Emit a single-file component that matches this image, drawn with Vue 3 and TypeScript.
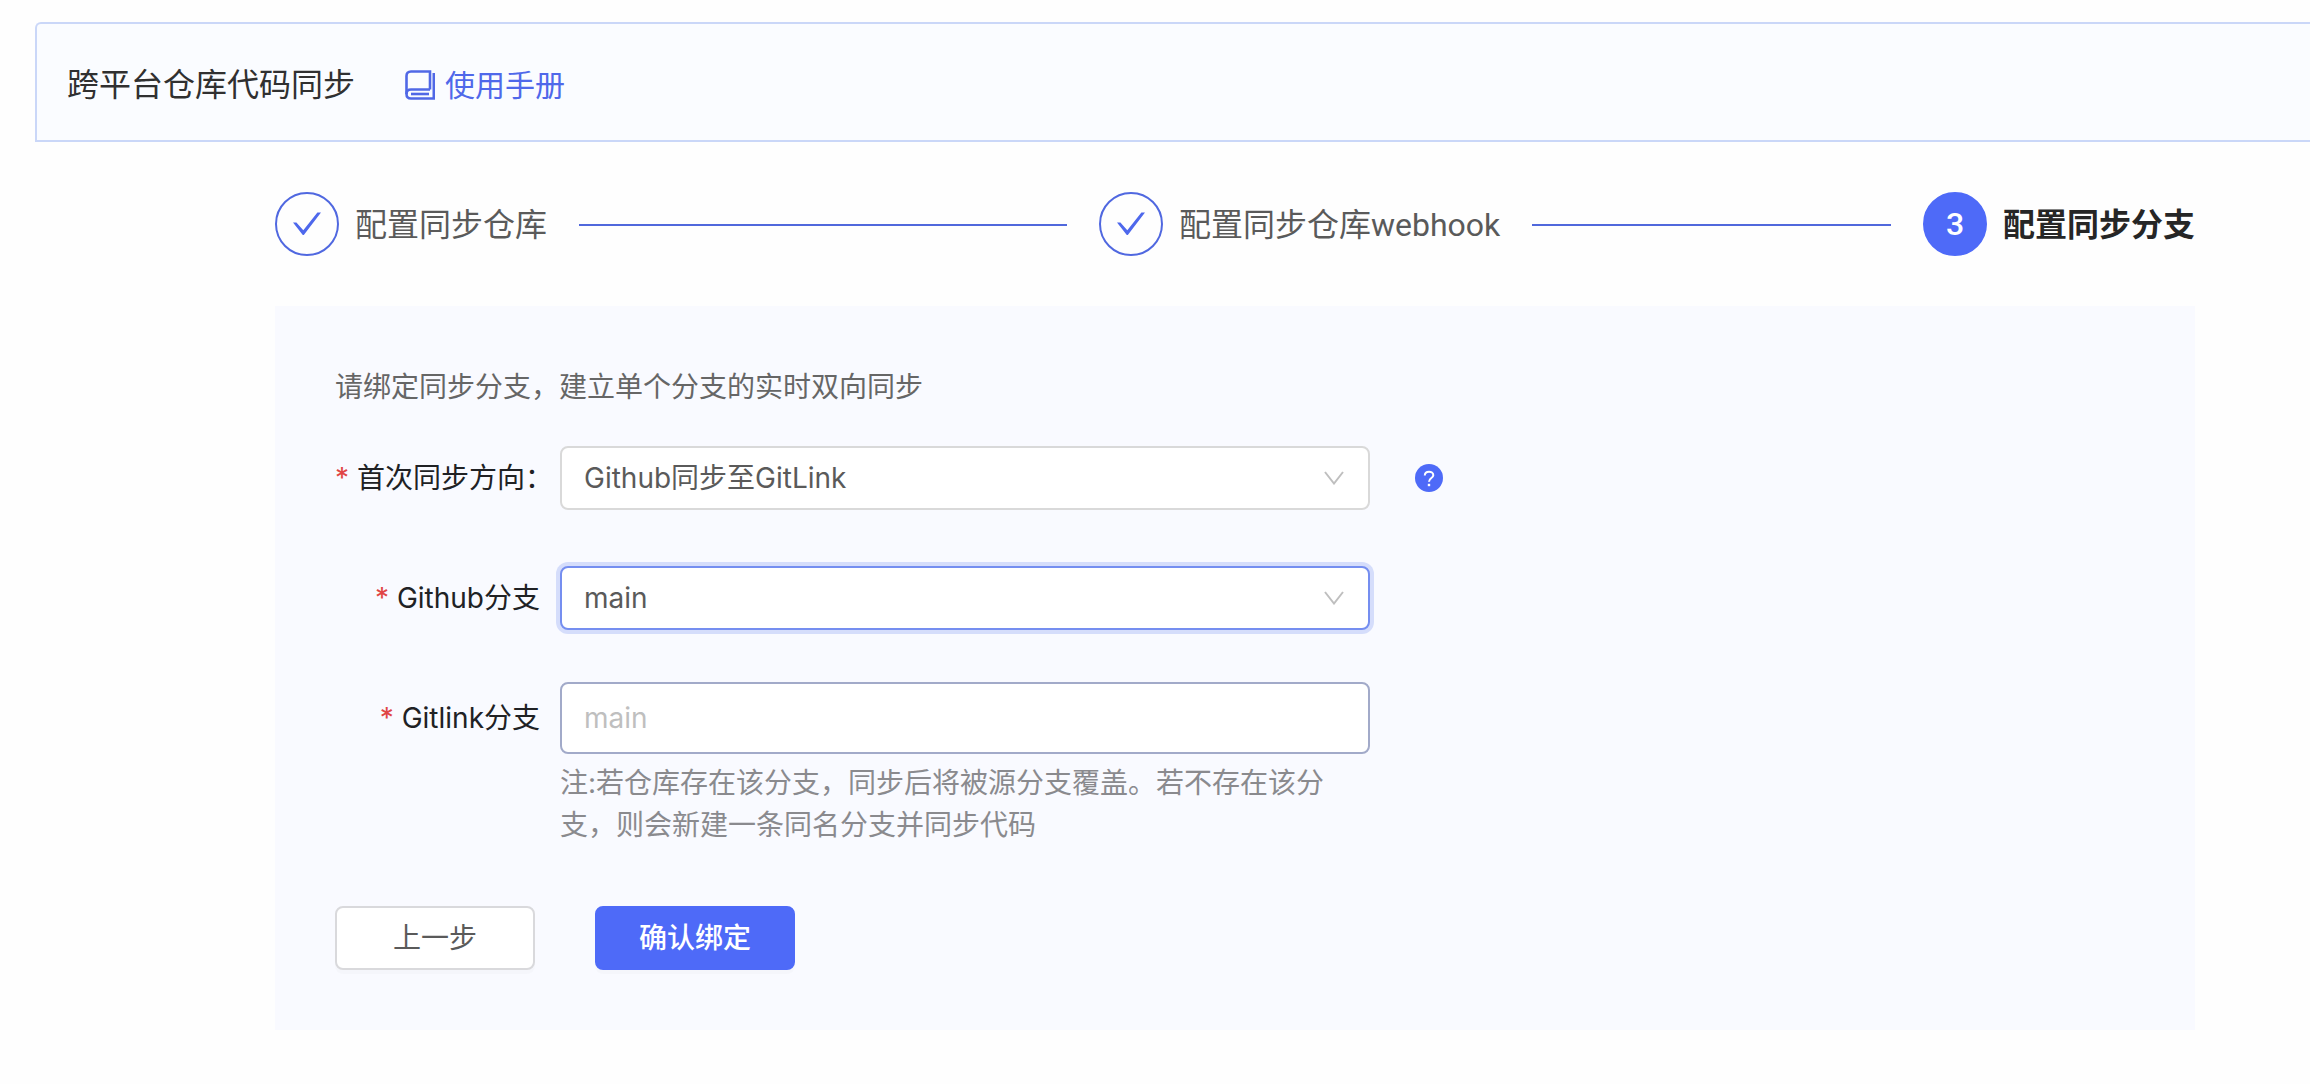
<script setup lang="ts">
import { ref } from 'vue'

interface Step {
  title: string
  status: 'finish' | 'process'
}

const steps: Step[] = [
  { title: '配置同步仓库', status: 'finish' },
  { title: '配置同步仓库webhook', status: 'finish' },
  { title: '配置同步分支', status: 'process' },
]

const directions: string[] = ['Github同步至GitLink', 'GitLink同步至Github']
const branches: string[] = ['main']

const direction = ref<string>(directions[0])
const githubBranch = ref<string>(branches[0])
const gitlinkBranch = ref<string>('')
</script>

<template>
  <div class="page">
    <header class="header">
      <h1 class="header-title">跨平台仓库代码同步</h1>
      <a class="manual" href="#">
        <svg class="manual-icon" viewBox="0 0 30 30" aria-hidden="true">
          <path d="M25 19.500V1.500H6Q1.500 1.500 1.500 6V24Q1.500 28.500 6 28.500H28.800V3" />
          <path d="M1.500 24Q1.500 19.500 6 19.500H25" />
          <path d="M6 24H24" />
        </svg>
        <span>使用手册</span>
      </a>
    </header>

    <main class="content">
      <ol class="steps">
        <li v-for="(step, index) in steps" :key="step.title" class="step" :class="step.status">
          <span class="step-icon">
            <svg v-if="step.status === 'finish'" class="check" viewBox="0 0 30 24" aria-hidden="true">
              <path d="M1 10.500H4.400L11.300 18.200L25.400 0.500H29L12.200 22.400Q11.300 23.500 10.400 22.400Z" />
            </svg>
            <template v-else>{{ index + 1 }}</template>
          </span>
          <span class="step-title">{{ step.title }}</span>
        </li>
      </ol>

      <form class="panel" @submit.prevent>
        <p class="intro">请绑定同步分支，建立单个分支的实时双向同步</p>

        <div class="row">
          <label class="label with-colon" for="direction"><span class="required">*</span>首次同步方向：</label>
          <div class="control">
            <select id="direction" v-model="direction" class="field">
              <option v-for="item in directions" :key="item">{{ item }}</option>
            </select>
            <svg class="arrow" viewBox="0 0 20 14" aria-hidden="true"><path d="M1 1L10 12.500L19 1" /></svg>
          </div>
          <button class="help" type="button" aria-label="帮助">
            <svg viewBox="0 0 28 28" aria-hidden="true">
              <circle cx="14" cy="14" r="14" />
              <path d="M9.800 11.400C9.800 6.500 18.300 6.500 18.300 11.200C18.300 14.200 14 14 14 17.800" />
              <rect x="12.800" y="19.800" width="2.400" height="2.400" />
            </svg>
          </button>
        </div>

        <div class="row">
          <label class="label" for="github"><span class="required">*</span>Github分支</label>
          <div class="control">
            <select id="github" v-model="githubBranch" class="field active">
              <option v-for="item in branches" :key="item">{{ item }}</option>
            </select>
            <svg class="arrow" viewBox="0 0 20 14" aria-hidden="true"><path d="M1 1L10 12.500L19 1" /></svg>
          </div>
        </div>

        <div class="row last">
          <label class="label" for="gitlink"><span class="required">*</span>Gitlink分支</label>
          <div class="control">
            <input id="gitlink" v-model="gitlinkBranch" class="field text-field" type="text" placeholder="main" />
          </div>
        </div>
        <p class="note">注:若仓库存在该分支，同步后将被源分支覆盖。若不存在该分支，则会新建一条同名分支并同步代码</p>

        <div class="actions">
          <button class="button" type="button">上一步</button>
          <button class="button primary" type="submit">确认绑定</button>
        </div>
      </form>
    </main>
  </div>
</template>

<style>
body {
  margin: 0;
  background: #fefefe;
}
</style>

<style scoped>
.page {
  box-sizing: border-box;
  padding: 22px 0 54px 35px;
  overflow: hidden;
  font-family: Inter, "Noto Sans CJK SC", sans-serif;
  font-size: 28px;
  line-height: 42px;
  color: #5a5a5a;
}

.header {
  box-sizing: border-box;
  display: flex;
  align-items: center;
  gap: 50px;
  min-height: 120px;
  padding: 6px 30px 0;
  border: 2px solid #cad7f8;
  border-right: 0;
  border-radius: 6px 0 0 0;
  background: #fafcff;
}

.header-title {
  margin: 0;
  font-size: 32px;
  font-weight: 400;
  color: #303030;
}

.manual {
  display: flex;
  align-items: center;
  gap: 10px;
  font-size: 30px;
  color: #4f68ea;
  text-decoration: none;
}

.manual-icon {
  width: 30px;
  height: 30px;
  fill: none;
  stroke: #5068e6;
  stroke-width: 2.6;
}

.content {
  margin: 50px 115px 0 240px;
}

.steps {
  display: flex;
  gap: 32px;
  margin: 0;
  padding: 0;
  list-style: none;
}

.step {
  display: flex;
  align-items: center;
  font-family: Roboto, "Noto Sans CJK SC", sans-serif;
  font-size: 32px;
}

.step:not(:last-child) {
  flex: 1;
}

.step:not(:last-child)::after {
  flex: 1;
  height: 2px;
  margin: 2px 0 0 32px;
  background: #5068dc;
  content: "";
}

.step-icon {
  box-sizing: border-box;
  display: flex;
  align-items: center;
  justify-content: center;
  width: 64px;
  height: 64px;
  margin-right: 16px;
  border: 2px solid #5068e0;
  border-radius: 50%;
}

.process .step-icon {
  border-color: #4e6af8;
  background: #4e6af8;
  font-weight: 500;
  color: #fff;
}

.step-title {
  padding-top: 2px;
}

.process .step-title {
  font-weight: 700;
  color: #262626;
}

.check {
  width: 30px;
  height: 24px;
  fill: #4e68ec;
}

.panel {
  margin-top: 50px;
  padding: 60px;
  background: #f9faff;
}

.intro {
  margin: 0 0 38px;
  color: #666;
}

.row {
  display: flex;
  align-items: center;
  margin-bottom: 56px;
}

.row.last {
  margin: -4px 0 8px;
}

.label {
  box-sizing: border-box;
  flex: none;
  width: 225px;
  padding-right: 20px;
  text-align: right;
  white-space: nowrap;
  color: #202124;
}

.label.with-colon {
  padding-right: 8px;
}

.required {
  margin-right: 8px;
  color: #e04545;
}

.control {
  position: relative;
  flex: 0 1 810px;
}

.field {
  box-sizing: border-box;
  display: block;
  width: 100%;
  height: 64px;
  margin: 0;
  padding: 0 22px;
  border: 2px solid #d9d9d9;
  border-radius: 8px;
  outline: 0;
  background: #fff;
  font: inherit;
  color: #5a5a5a;
  appearance: none;
}

.field.active {
  border-color: #758ef0;
  box-shadow: 0 0 0 4px #d5ddfb;
}

.text-field {
  height: 72px;
  border-color: #a2aac9;
}

.text-field::placeholder {
  color: #bfbfbf;
  opacity: 1;
}

.arrow {
  position: absolute;
  top: 25px;
  right: 26px;
  width: 20px;
  height: 14px;
  fill: none;
  stroke: #bfbfbf;
  stroke-width: 2;
  pointer-events: none;
}

.help {
  display: block;
  width: 28px;
  height: 28px;
  margin: 0 0 0 45px;
  padding: 0;
  border: 0;
  background: none;
}

.help svg {
  display: block;
  width: 28px;
  height: 28px;
  fill: #4e6af8;
}

.help path {
  fill: none;
  stroke: #fff;
  stroke-width: 2;
}

.help rect {
  fill: #fff;
}

.note {
  max-width: 810px;
  margin: 0 0 60px 225px;
  color: #8a8a8e;
}

.actions {
  display: flex;
  gap: 60px;
}

.button {
  width: 200px;
  height: 64px;
  padding: 0;
  border: 2px solid #d9d9dc;
  border-radius: 8px;
  background: #fff;
  box-shadow: 0 4px 0 rgba(0, 0, 0, 0.015);
  font: inherit;
  color: #5a5a5a;
}

.button.primary {
  border-color: #4e6af8;
  background: #4e6af8;
  font-weight: 500;
  color: #fff;
}
</style>
